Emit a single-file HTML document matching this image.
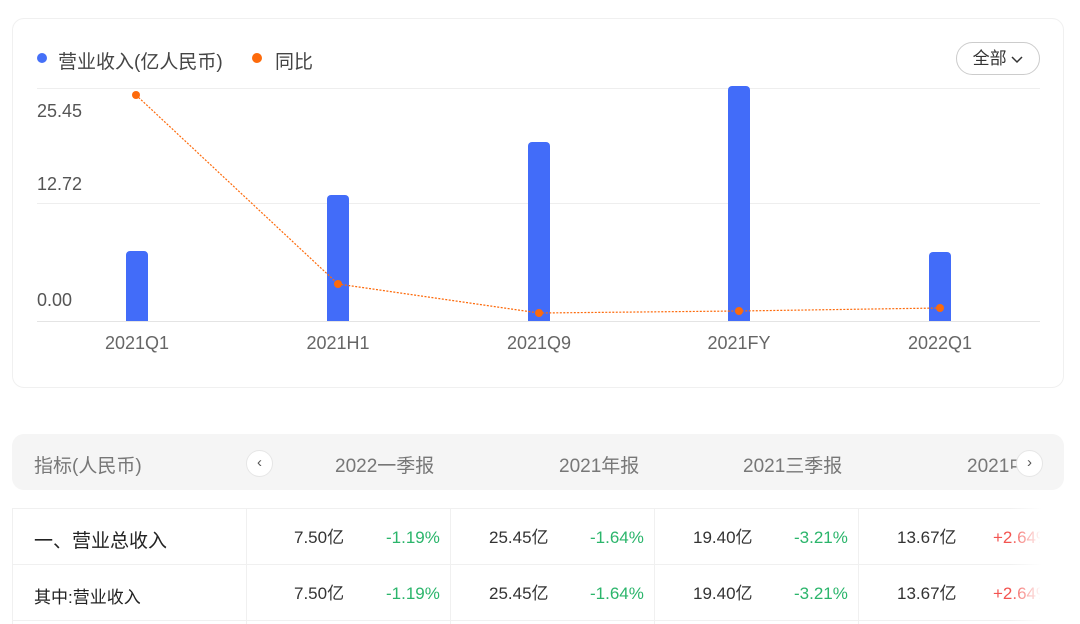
<!DOCTYPE html><html><head><meta charset="utf-8"><style>
html,body{margin:0;width:1080px;height:624px;overflow:hidden}
body{background:#fff;font-family:"Liberation Sans","Noto Sans CJK SC",sans-serif;position:relative;color:#333}
.a{position:absolute;white-space:nowrap}
.card{position:absolute;left:12px;top:18px;width:1050px;height:368px;border:1px solid #f0f0f0;border-radius:12px}
.btn{position:absolute;left:956px;top:42px;width:84px;height:33px;border:1px solid #ccc;border-radius:17px;box-sizing:border-box;font-size:17px;line-height:31px;text-align:center;color:#333}
.hd{position:absolute;left:12px;top:434px;width:1052px;height:56px;background:#f5f5f5;border-radius:12px}
.circ{position:absolute;width:27px;height:27px;border-radius:50%;background:#fff;border:1px solid #e6e6e6;box-sizing:border-box;text-align:center;line-height:23px;font-size:15px;color:#555}
.hl{position:absolute;left:12px;width:1040px;height:1px;background:#f0f0f0}
.v{position:absolute;top:508px;width:1px;height:116px;background:#f0f0f0}
.t{position:absolute;font-size:17px;line-height:20px;height:20px}
.g{color:#2bb56b}.r{color:#f35450}
</style></head><body>
<div class="card"></div>
<div class="a" style="left:37px;top:53px;width:10px;height:10px;border-radius:50%;background:#4570f8"></div>
<div class="a" style="left:58px;top:47px;font-size:19px;color:#444">营业收入(亿人民币)</div>
<div class="a" style="left:252px;top:53px;width:10px;height:10px;border-radius:50%;background:#fd6a0b"></div>
<div class="a" style="left:275px;top:47px;font-size:19px;color:#444">同比</div>
<div class="btn">全部 <svg width="12" height="8" viewBox="0 0 12 8"><path d="M1 1l5 5 5-5" fill="none" stroke="#333" stroke-width="1.5"/></svg></div>
<svg class="a" style="left:0;top:0" width="1080" height="400">
<g stroke="#eeeeee" stroke-width="1"><line x1="37" x2="1040" y1="88.5" y2="88.5"/><line x1="37" x2="1040" y1="203.5" y2="203.5"/><line x1="37" x2="1040" y1="321.5" y2="321.5" stroke="#e4e4e4"/></g>
<g fill="#426cf9"><path d="M126 321V255a4 4 0 0 1 4-4h14a4 4 0 0 1 4 4V321z"/><path d="M327 321V199a4 4 0 0 1 4-4h14a4 4 0 0 1 4 4V321z"/><path d="M528 321V146a4 4 0 0 1 4-4h14a4 4 0 0 1 4 4V321z"/><path d="M728 321V90a4 4 0 0 1 4-4h14a4 4 0 0 1 4 4V321z"/><path d="M929 321V256a4 4 0 0 1 4-4h14a4 4 0 0 1 4 4V321z"/></g>
<polyline points="136,95 338,284 539,313 739,311 940,308" fill="none" stroke="#fd6a0b" stroke-width="1.2" stroke-dasharray="2,1.5"/>
<g fill="#fd6a0b"><circle cx="136" cy="95" r="4"/><circle cx="338" cy="284" r="4"/><circle cx="539" cy="313" r="4"/><circle cx="739" cy="311" r="4"/><circle cx="940" cy="308" r="4"/></g>
<g font-size="18" fill="#555" font-family="Liberation Sans,sans-serif"><text x="37" y="117">25.45</text><text x="37" y="190">12.72</text><text x="37" y="306">0.00</text>
<g text-anchor="middle" fill="#666"><text x="137" y="349">2021Q1</text><text x="338" y="349">2021H1</text><text x="539" y="349">2021Q9</text><text x="739" y="349">2021FY</text><text x="940" y="349">2022Q1</text></g></g>
</svg>
<div class="hd"></div>
<div class="a" style="left:34px;top:451px;font-size:19px;color:#777">指标(人民币)</div>
<div class="circ" style="left:246px;top:450px">‹</div>
<div class="a" style="left:335px;top:451px;font-size:19px;color:#777">2022一季报</div>
<div class="a" style="left:559px;top:451px;font-size:19px;color:#777">2021年报</div>
<div class="a" style="left:743px;top:451px;font-size:19px;color:#777">2021三季报</div>
<div class="a" style="left:967px;top:451px;font-size:19px;color:#777;width:50px;overflow:hidden">2021中报</div>
<div class="circ" style="left:1016px;top:450px">›</div>
<div class="hl" style="top:508px"></div><div class="hl" style="top:564px"></div><div class="hl" style="top:620px"></div>
<div class="v" style="left:12px"></div><div class="v" style="left:246px"></div><div class="v" style="left:450px"></div><div class="v" style="left:654px"></div><div class="v" style="left:858px"></div>
<div class="a" style="left:34px;top:526px;font-size:19px;color:#222">一、营业总收入</div>
<div class="a" style="left:34px;top:583px;font-size:17px;color:#222">其中:营业收入</div>
<div class="a" style="left:0;top:527px;width:1040px;height:90px;overflow:hidden">
<span class="t" style="left:294px;top:1px">7.50亿</span><span class="t g" style="left:386px;top:1px">-1.19%</span>
<span class="t" style="left:489px;top:1px">25.45亿</span><span class="t g" style="left:590px;top:1px">-1.64%</span>
<span class="t" style="left:693px;top:1px">19.40亿</span><span class="t g" style="left:794px;top:1px">-3.21%</span>
<span class="t" style="left:897px;top:1px">13.67亿</span><span class="t r" style="left:993px;top:1px">+2.64%</span>
<span class="t" style="left:294px;top:57px">7.50亿</span><span class="t g" style="left:386px;top:57px">-1.19%</span>
<span class="t" style="left:489px;top:57px">25.45亿</span><span class="t g" style="left:590px;top:57px">-1.64%</span>
<span class="t" style="left:693px;top:57px">19.40亿</span><span class="t g" style="left:794px;top:57px">-3.21%</span>
<span class="t" style="left:897px;top:57px">13.67亿</span><span class="t r" style="left:993px;top:57px">+2.64%</span>
</div>
<div class="a" style="left:1010px;top:508px;width:70px;height:116px;background:linear-gradient(to right,rgba(255,255,255,0),#fff 45%)"></div>
</body></html>
